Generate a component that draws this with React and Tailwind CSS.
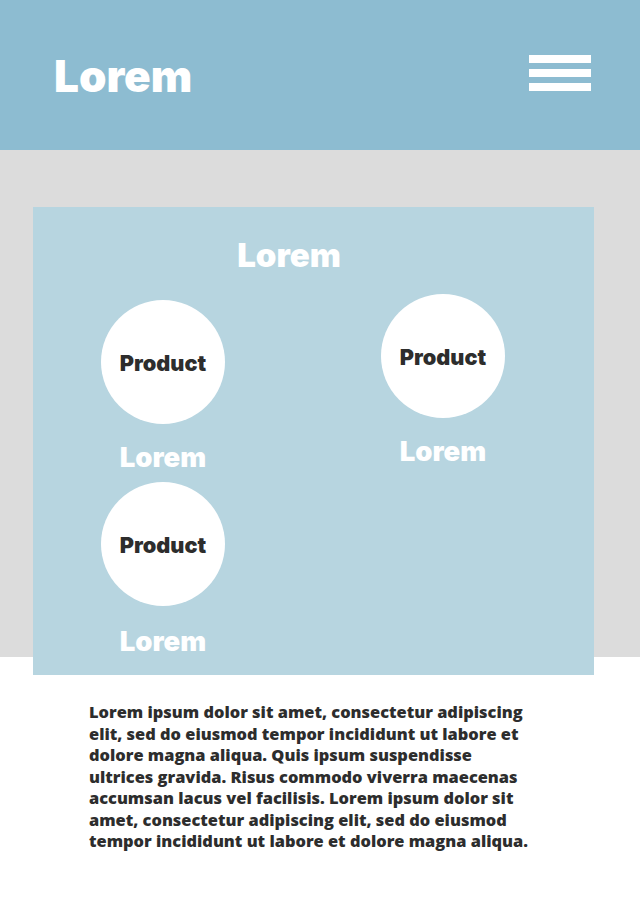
export default function App() {
  const font = { fontFamily: 'Inter, "Liberation Sans", Arial, sans-serif', fontWeight: 900 };
  const para = { fontFamily: '"Open Sans", "Liberation Sans", sans-serif', fontWeight: 800 };
  const Item = ({ mt, lmt }) => (
    <div className={`flex flex-col items-center w-[124px] ${mt}`}>
      <div className="w-[124px] h-[124px] rounded-full bg-white flex items-center justify-center">
        <span className="text-[21.7px] leading-none text-[#2d2d2d] mt-[4px]">Product</span>
      </div>
      <div className={`${lmt} text-[27.5px] leading-[27.5px] text-white`}>Lorem</div>
    </div>
  );
  return (
    <div className="w-[640px] min-h-[900px] bg-white" style={font}>
      <header className="h-[150px] bg-[#8dbcd1] flex justify-between items-start pl-[54px] pr-[49px]">
        <div className="mt-[54px] text-[44px] leading-[44px] text-white">Lorem</div>
        <div className="mt-[55px] flex flex-col gap-[6.5px] w-[62px]">
          <div className="h-[7.7px] bg-white" />
          <div className="h-[7.7px] bg-white" />
          <div className="h-[7.7px] bg-white" />
        </div>
      </header>
      <section className="h-[507px] bg-[#dcdcdc] pt-[57px] pl-[33px]">
        <div className="w-[561px] h-[468px] bg-[#b7d5e0] pt-[31.5px]">
          <div className="w-[512px] text-center text-[33px] leading-[33px] text-white">Lorem</div>
          <div className="flex items-start">
            <div className="ml-[68px] mt-[28.5px] flex flex-col gap-[10.4px]">
              <Item mt="" lmt="mt-[20.3px]" />
              <Item mt="" lmt="mt-[22px]" />
            </div>
            <div className="ml-[156px]">
              <Item mt="mt-[22.5px]" lmt="mt-[20.3px]" />
            </div>
          </div>
        </div>
      </section>
      <section className="pt-[44.3px] pl-[89px]">
        <p className="w-[448px] text-[16.4px] leading-[21.5px] text-[#2d2d2d]" style={para}>
          Lorem ipsum dolor sit amet, consectetur adipiscing elit, sed do eiusmod tempor incididunt ut labore et dolore magna aliqua. Quis ipsum suspendisse ultrices gravida. Risus commodo viverra maecenas accumsan lacus vel facilisis. Lorem ipsum dolor sit amet, consectetur adipiscing elit, sed do eiusmod tempor incididunt ut labore et dolore magna aliqua.
        </p>
      </section>
    </div>
  );
}
